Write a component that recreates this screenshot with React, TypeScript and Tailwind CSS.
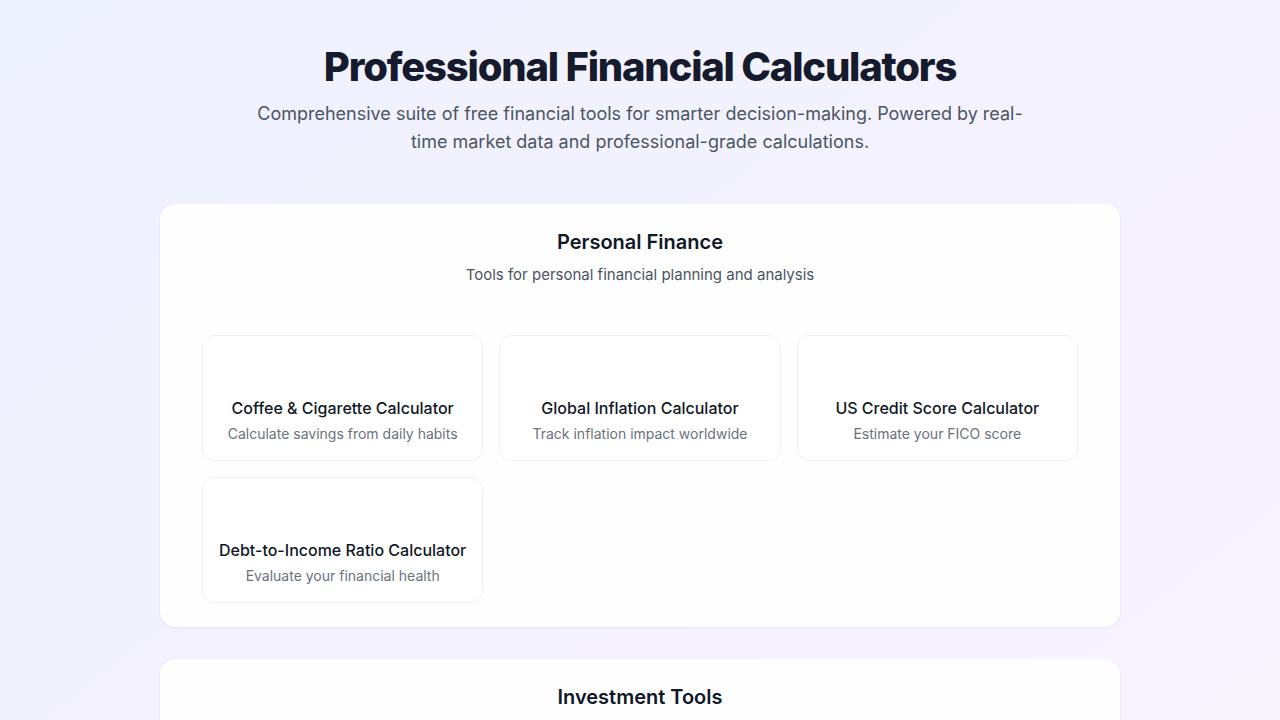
import React from "react";

const items = [
  { title: "Coffee & Cigarette Calculator", desc: "Calculate savings from daily habits" },
  { title: "Global Inflation Calculator", desc: "Track inflation impact worldwide" },
  { title: "US Credit Score Calculator", desc: "Estimate your FICO score" },
  { title: "Debt-to-Income Ratio Calculator", desc: "Evaluate your financial health" },
];

function Item({ title, desc }: { title: string; desc: string }) {
  return (
    <div className="h-[126px] rounded-xl border border-[#eef0f3] bg-white px-4 pt-[60px] text-center">
      <div className="text-base font-medium leading-6 text-[#111827]">{title}</div>
      <div className="mt-1 text-sm leading-5 text-[#6b7280]">{desc}</div>
    </div>
  );
}

export default function App() {
  return (
    <div
      className="min-h-screen bg-linear-to-br from-[#eef1fe] via-[#f4f2fe] to-[#fbf4fe] pb-16"
      style={{ fontFamily: "Inter, 'Noto Sans', sans-serif" }}
    >
      <div className="flex flex-col items-center pt-[44px]">
        <h1 className="text-[40px] font-extrabold leading-[46px] tracking-[-0.03em] text-[#151b2c]">
          Professional Financial Calculators
        </h1>
        <p className="mt-[10px] max-w-3xl text-center text-lg leading-7 text-[#4b5563]">
          Comprehensive suite of free financial tools for smarter decision-making. Powered by real-time market data and
          professional-grade calculations.
        </p>
      </div>

      <div className="mx-auto mt-[48px] flex w-[960px] flex-col gap-8">
        <section className="rounded-2xl bg-white/90 px-[42px] pb-6 pt-6 shadow-[0_1px_3px_rgba(0,0,0,0.06)]">
          <div className="text-center">
            <h2 className="text-xl font-semibold leading-7 text-[#111827]">Personal Finance</h2>
            <p className="mt-[9px] text-[15px] leading-5 text-[#4b5563]">Tools for personal financial planning and analysis</p>
          </div>
          <div className="mt-[50px] grid grid-cols-3 gap-4">
            {items.map((it) => (
              <Item key={it.title} {...it} />
            ))}
          </div>
        </section>
        <section className="rounded-2xl bg-white/90 px-[42px] pb-6 pt-6 shadow-[0_1px_3px_rgba(0,0,0,0.06)]">
          <div className="text-center">
            <h2 className="text-xl font-semibold leading-7 text-[#111827]">Investment Tools</h2>
            <p className="mt-[9px] text-[15px] leading-5 text-[#4b5563]">Tools for investment analysis and portfolio management</p>
          </div>
          <div className="mt-[50px] grid h-[126px] grid-cols-3 gap-4" />
        </section>
      </div>
    </div>
  );
}
